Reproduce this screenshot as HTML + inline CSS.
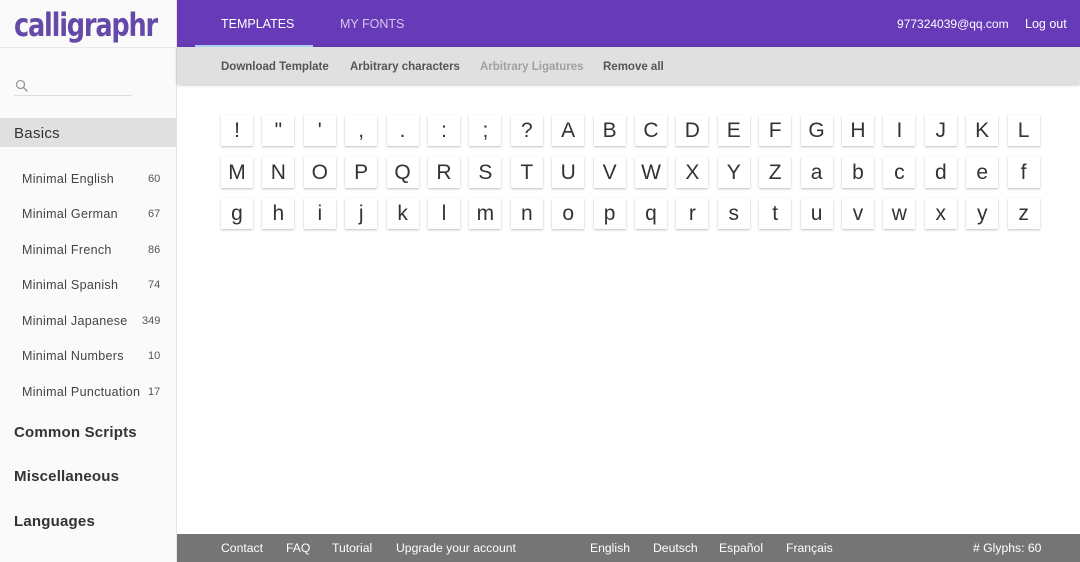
<!DOCTYPE html>
<html><head><meta charset="utf-8"><style>
*{margin:0;padding:0;box-sizing:border-box}
body{width:1080px;height:562px;overflow:hidden;font-family:"Liberation Sans",sans-serif;background:#fff;position:relative}
.side{position:absolute;left:0;top:0;width:177px;height:562px;background:#fafafa;border-right:1px solid #e4e4e4}
.logo{position:absolute;left:14px;top:6px;font-size:32px;font-weight:900;color:#6449a8;letter-spacing:-1.5px;transform-origin:0 0;transform:scaleX(.8);font-family:"DejaVu Sans",sans-serif;white-space:nowrap}
.hdrline{position:absolute;left:0;top:47px;width:177px;height:1px;background:#e8e8e8}
.search{position:absolute;left:14px;top:95px;width:118px;height:1px;background:#ddd}
.basics{position:absolute;left:0;top:118px;width:177px;height:29px;background:#e0e0e0;font-size:15px;color:#333;padding:7px 14px;letter-spacing:.3px}
.item{position:absolute;left:22px;font-size:12.5px;color:#444;letter-spacing:.3px}
.num{position:absolute;left:148px;font-size:11px;color:#555}
.cat{position:absolute;left:14px;font-size:15px;color:#333;font-weight:bold;letter-spacing:.2px}
.top{position:absolute;left:177px;top:0;width:903px;height:47px;background:#673ab7;color:#fff;font-size:12.5px}
.top span{position:absolute;top:17px}
.sub{position:absolute;left:177px;top:47px;width:903px;height:37px;background:#e0e0e0;box-shadow:0 1px 3px rgba(0,0,0,.25);font-size:11.5px;font-weight:bold;color:#555}
.sub span{position:absolute;top:14px}
.tile{position:absolute;width:32px;height:31px;background:#fff;box-shadow:0 1px 2px rgba(0,0,0,.25);text-align:center;font-family:"Liberation Sans",sans-serif;font-size:21px;color:#333;line-height:31px}
.foot{position:absolute;left:177px;top:534px;width:903px;height:28px;background:#757575;color:#fff;font-size:12.2px}
.foot span{position:absolute;top:7px}
</style></head><body>
<div class="side">
<div class="logo">calligraphr</div>
<div class="hdrline"></div>
<svg style="position:absolute;left:15px;top:79px" width="14" height="14" viewBox="0 0 14 14"><circle cx="5.5" cy="5.5" r="4" fill="none" stroke="#999" stroke-width="1.3"/><path d="M8.5 8.5L12.5 12.5" stroke="#999" stroke-width="1.4"/></svg>
<div class="search"></div>
<div class="basics">Basics</div>
<div class="item" style="top:172px">Minimal English</div><div class="num" style="top:173px">60</div>
<div class="item" style="top:207px">Minimal German</div><div class="num" style="top:208px">67</div>
<div class="item" style="top:243px">Minimal French</div><div class="num" style="top:244px">86</div>
<div class="item" style="top:278px">Minimal Spanish</div><div class="num" style="top:279px">74</div>
<div class="item" style="top:314px">Minimal Japanese</div><div class="num" style="top:315px;left:142px">349</div>
<div class="item" style="top:349px">Minimal Numbers</div><div class="num" style="top:350px">10</div>
<div class="item" style="top:385px">Minimal Punctuation</div><div class="num" style="top:386px">17</div>
<div class="cat" style="top:424px">Common Scripts</div>
<div class="cat" style="top:468px">Miscellaneous</div>
<div class="cat" style="top:513px">Languages</div>
</div>
<div class="top">
<span style="left:44px">TEMPLATES</span>
<div style="position:absolute;left:18px;top:45px;width:118px;height:2px;background:#b3d4fc"></div>
<span style="left:163px;color:#d6c8ee">MY FONTS</span>
<span style="left:720px;font-size:12px">977324039@qq.com</span>
<span style="left:848px">Log out</span>
</div>
<div class="sub">
<span style="left:44px">Download Template</span>
<span style="left:173px">Arbitrary characters</span>
<span style="left:303px;color:#a0a0a0">Arbitrary Ligatures</span>
<span style="left:426px">Remove all</span>
</div>
<div id="tiles"></div>
<div class="foot">
<span style="left:44px">Contact</span><span style="left:109px">FAQ</span><span style="left:155px">Tutorial</span><span style="left:219px">Upgrade your account</span>
<span style="left:413px">English</span><span style="left:476px">Deutsch</span><span style="left:542px">Español</span><span style="left:609px">Français</span>
<span style="left:796px"># Glyphs: 60</span>
</div>
<script>
var rows=["!\"',.:;?ABCDEFGHIJKL","MNOPQRSTUVWXYZabcdef","ghijklmnopqrstuvwxyz"];
var tops=[115,157,198],h="";
rows.forEach(function(r,i){for(var j=0;j<r.length;j++){var c=r[j];h+='<div class="tile" style="left:'+(221+j*41.4)+'px;top:'+tops[i]+'px">'+c+'</div>';}});
document.getElementById("tiles").innerHTML=h;
</script>
</body></html>
